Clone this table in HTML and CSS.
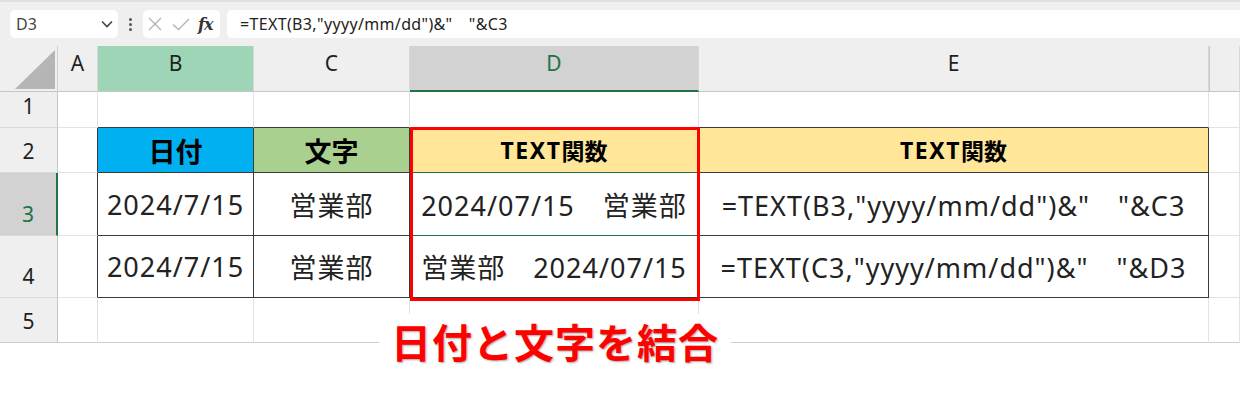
FILE: index.html
```html
<!DOCTYPE html>
<html lang="ja">
<head>
<meta charset="utf-8">
<title>TEXT関数</title>
<link rel="stylesheet" href="styles.css">
</head>
<body>
<div class="app">
  <div class="topbar">
    <div class="namebox">
      <span class="ref">D3</span>
      <svg class="chev" width="12" height="8" viewBox="0 0 12 8"><path d="M1 1.5 L6 6.5 L11 1.5" fill="none" stroke="#444" stroke-width="1.6"/></svg>
    </div>
    <div class="dots"><i></i><i></i><i></i></div>
    <div class="fxbox">
      <svg class="ic-x" width="16" height="16" viewBox="0 0 16 16"><path d="M2 2 L14 14 M14 2 L2 14" stroke="#b3b3b3" stroke-width="1.3"/></svg>
      <svg class="ic-ok" width="20" height="16" viewBox="0 0 20 16"><path d="M2 8.5 L7.5 13.5 L18 3" fill="none" stroke="#b3b3b3" stroke-width="1.3"/></svg>
      <span class="fx">fx</span>
    </div>
    <div class="formula">=TEXT(B3,"yyyy/mm/dd")&amp;"　"&amp;C3</div>
  </div>

  <div class="sheet">
    <div class="corner"><svg width="58" height="46" viewBox="0 0 58 46"><polygon points="15,43 55,43 55,4" fill="#b5b5b5"/></svg></div>
    <div class="ch">A</div>
    <div class="ch chB">B</div>
    <div class="ch">C</div>
    <div class="ch chD">D</div>
    <div class="ch">E</div>
    <div class="ch chF"></div>

    <div class="rh">1</div>
    <div class="c"></div>
    <div class="c tt"></div>
    <div class="c tt"></div>
    <div class="c tt"></div>
    <div class="c tt"></div>
    <div class="c"></div>

    <div class="rh">2</div>
    <div class="c tl"></div>
    <div class="c t hd blue">日付</div>
    <div class="c t hd green">文字</div>
    <div class="c t hd sm yellow selb"><span class="lat">TEXT</span>関数</div>
    <div class="c t hd sm yellow"><span class="lat">TEXT</span>関数</div>
    <div class="c"></div>

    <div class="rh rh3">3</div>
    <div class="c tl"></div>
    <div class="c t v">2024/7/15</div>
    <div class="c t v">営業部</div>
    <div class="c t v selb">2024/07/15　営業部</div>
    <div class="c t v">=TEXT(B3,"yyyy/mm/dd")&amp;"　"&amp;C3</div>
    <div class="c"></div>

    <div class="rh">4</div>
    <div class="c tl"></div>
    <div class="c t v">2024/7/15</div>
    <div class="c t v">営業部</div>
    <div class="c t v">営業部　2024/07/15</div>
    <div class="c t v">=TEXT(C3,"yyyy/mm/dd")&amp;"　"&amp;D3</div>
    <div class="c"></div>

    <div class="rh last">5</div>
    <div class="c last"></div>
    <div class="c last"></div>
    <div class="c last"></div>
    <div class="c last"></div>
    <div class="c last"></div>
    <div class="c last"></div>

    <div class="redbox"></div>
  </div>

  <div class="label">日付と文字を結合</div>
</div>
</body>
</html>
```

FILE: styles.css
```css
* { box-sizing: border-box; margin: 0; padding: 0; }

body {
  margin: 0;
  background: #fff;
  font-family: "Noto Sans", "Noto Sans CJK JP", sans-serif;
  color: #222;
}

.app {
  position: relative;
  width: 1240px;
  height: 396px;
  overflow: hidden;
  background: #fff;
}

/* ---------- formula bar ---------- */
.topbar {
  height: 46px;
  background: #efefef;
  border-top: 2px solid #e0e0e0;
  display: flex;
  align-items: flex-start;
  padding: 8px 0 0 10px;
}

.namebox {
  width: 108px;
  height: 28px;
  background: #fff;
  border-radius: 5px;
  display: flex;
  align-items: center;
  justify-content: space-between;
  padding: 0 5px 0 6px;
}

.ref {
  font-size: 16px;
  color: #444;
  line-height: 1;
}

.dots {
  width: 25px;
  height: 28px;
  display: flex;
  flex-direction: column;
  align-items: center;
  justify-content: center;
  gap: 2px;
}

.dots i {
  display: block;
  width: 3px;
  height: 3px;
  border-radius: 50%;
  background: #555;
}

.fxbox {
  width: 77px;
  height: 28px;
  background: #fff;
  border-radius: 5px;
  display: flex;
  align-items: center;
  padding-left: 4px;
}

.ic-x { margin-right: 8px; flex: none; }
.ic-ok { margin-right: 7px; flex: none; }

.fx {
  font-family: "DejaVu Serif", "Liberation Serif", serif;
  font-style: italic;
  font-weight: 700;
  font-size: 16px;
  color: #333;
  letter-spacing: -1px;
}

.formula {
  flex: 1;
  margin-left: 7px;
  height: 28px;
  background: #fff;
  border-radius: 5px 0 0 5px;
  font-size: 16px;
  letter-spacing: 0.35px;
  line-height: 28px;
  padding-left: 13px;
  color: #222;
  white-space: pre;
}

/* ---------- sheet ---------- */
.sheet {
  position: relative;
  display: grid;
  grid-template-columns: 58px 40px 156px 156px 289px 510px 31px;
  grid-template-rows: 46px 36px 45px 63px 62px 45px;
}

.corner {
  background: #efefef;
  border-right: 1px solid #cfcfcf;
  border-bottom: 1px solid #c6c6c6;
}

.corner svg { display: block; }

.ch {
  background: #efefef;
  border-right: 1px solid #d8d8d8;
  border-bottom: 1px solid #c6c6c6;
  font-size: 21px;
  line-height: 21px;
  color: #1f1f1f;
  display: flex;
  justify-content: center;
  align-items: flex-end;
  padding-bottom: 17px;
}

.chB { background: #9fd5b7; }

.chD {
  background: #d2d2d2;
  color: #217346;
  border-bottom: 2px solid #217346;
  padding-bottom: 16px;
}

.chF { border-left: 1px solid #c6c6c6; }

.rh {
  background: #efefef;
  border-right: 1px solid #c6c6c6;
  border-bottom: 1px solid #d8d8d8;
  font-size: 21px;
  line-height: 21px;
  color: #1f1f1f;
  display: flex;
  justify-content: center;
  align-items: flex-end;
  padding-bottom: 10px;
}

.rh3 {
  background: #d2d2d2;
  color: #217346;
  border-right: 2px solid #217346;
}

.c {
  border-right: 1px solid #e2e2e2;
  border-bottom: 1px solid #e2e2e2;
  display: flex;
  align-items: center;
  justify-content: center;
  white-space: pre;
}

.tt { border-bottom-color: #3a3a3a; }
.tl { border-right-color: #3a3a3a; }

.t {
  border-right-color: #3a3a3a;
  border-bottom-color: #3a3a3a;
}

.last { border-bottom-color: #cdcdcd; }

.hd {
  font-family: "Noto Sans CJK JP", "Noto Sans", sans-serif;
  font-weight: 700;
  font-size: 27px;
  color: #000;
}

.hd.sm { font-size: 23px; }

.lat {
  font-family: "Noto Sans", sans-serif;
  letter-spacing: 1.5px;
}

.blue { background: #00b0f0; }
.green { background: #a9d08e; }
.yellow { background: #ffe699; }

.selb { border-bottom-color: #217346; }

.v {
  font-size: 27px;
  letter-spacing: 1px;
  color: #222;
}

/* annotation frame over D2:D4 */
.redbox {
  position: absolute;
  left: 410px;
  top: 81px;
  width: 290px;
  height: 174px;
  border: 3px solid #ff0000;
  z-index: 2;
}

/* ---------- annotation ---------- */
.label {
  position: absolute;
  left: 379px;
  top: 314px;
  width: 352px;
  height: 54px;
  background: #fff;
  display: flex;
  align-items: center;
  justify-content: center;
  font-family: "Noto Sans CJK JP", sans-serif;
  font-weight: 700;
  font-size: 40px;
  letter-spacing: 1px;
  color: #ff0000;
  text-shadow: 1px 1px 2px rgba(0, 0, 0, 0.35);
  line-height: 1;
}
```
